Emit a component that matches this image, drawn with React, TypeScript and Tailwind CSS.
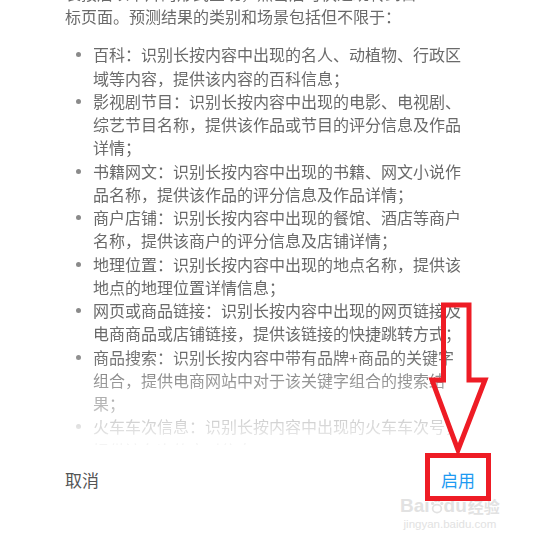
import React from "react";

const items: string[][] = [
  ["百科：识别长按内容中出现的名人、动植物、行政区", "域等内容，提供该内容的百科信息；"],
  ["影视剧节目：识别长按内容中出现的电影、电视剧、", "综艺节目名称，提供该作品或节目的评分信息及作品", "详情；"],
  ["书籍网文：识别长按内容中出现的书籍、网文小说作", "品名称，提供该作品的评分信息及作品详情；"],
  ["商户店铺：识别长按内容中出现的餐馆、酒店等商户", "名称，提供该商户的评分信息及店铺详情；"],
  ["地理位置：识别长按内容中出现的地点名称，提供该", "地点的地理位置详情信息；"],
  ["网页或商品链接：识别长按内容中出现的网页链接及", "电商商品或店铺链接，提供该链接的快捷跳转方式；"],
  ["商品搜索：识别长按内容中带有品牌+商品的关键字", "组合，提供电商网站中对于该关键字组合的搜索结", "果；"],
  ["火车车次信息：识别长按内容中出现的火车车次号，", "提供该车次的实时信息；"],
];

export default function App() {
  return (
    <div
      className="relative w-[538px] h-[542px] overflow-hidden bg-white"
      style={{ fontFamily: '"Noto Sans CJK SC", "Noto Sans", sans-serif' }}
    >
      <div className="h-[445px] overflow-hidden [mask-image:linear-gradient(to_bottom,black_352px,transparent_452px)]">
        <div className="-mt-[18px] pl-[65px] text-[16px] leading-[23.25px] text-[#6a6a6a] whitespace-nowrap">
          <p>
            长按后以卡片的形式呈现，点击后可快速跳转到目
            <br />
            标页面。预测结果的类别和场景包括但不限于：
          </p>
          <ul className="mt-[14.75px] flex flex-col">
            {items.map((lines, i) => (
              <li key={i} className="flex">
                <div className="w-[28px] h-[23.25px] flex items-center pl-[11px]">
                  <span className="block w-[5px] h-[5px] rounded-full bg-[#8a8a8a]" />
                </div>
                <div>
                  {lines.map((l, j) => (
                    <div key={j}>{l}</div>
                  ))}
                </div>
              </li>
            ))}
          </ul>
        </div>
      </div>

      <div className="flex items-center justify-between pl-[65px] pr-[63px] pt-[23px]">
        <span className="text-[17px] leading-[24px] text-[#555555]">取消</span>
        <span className="text-[17px] leading-[24px] text-[#1e9af2]">启用</span>
      </div>

      <div className="absolute left-[400px] top-[496px] flex flex-col items-center text-[#e2e2e2] leading-none whitespace-nowrap">
        <div className="flex items-center">
          <span className="text-[19px] font-bold" style={{ fontFamily: '"Liberation Sans", Arial, sans-serif' }}>
            Bai
          </span>
          <svg width="14" height="16" viewBox="0 0 16 18">
            <ellipse cx="8" cy="12" rx="5" ry="4.5" fill="none" stroke="#e2e2e2" strokeWidth="2" />
            <circle cx="3" cy="6" r="1.8" fill="#e2e2e2" />
            <circle cx="6.5" cy="3" r="1.8" fill="#e2e2e2" />
            <circle cx="10" cy="3" r="1.8" fill="#e2e2e2" />
            <circle cx="13.5" cy="6" r="1.8" fill="#e2e2e2" />
          </svg>
          <span className="text-[19px] font-bold" style={{ fontFamily: '"Liberation Sans", Arial, sans-serif' }}>
            du
          </span>
          <span className="text-[16px] font-bold ml-[1px]">经验</span>
        </div>
        <span
          className="mt-[4px] text-[11.5px]"
          style={{ fontFamily: '"Liberation Sans", Arial, sans-serif' }}
        >
          jingyan.baidu.com
        </span>
      </div>

      <svg className="absolute left-0 top-0 pointer-events-none" width="538" height="542" viewBox="0 0 538 542">
        <polygon
          points="443.5,305 469,305 469,380 485,380 458,450 432,380 443.5,380"
          fill="none"
          stroke="#ee1c25"
          strokeWidth="5"
          strokeLinejoin="miter"
        />
        <rect x="427.5" y="455.5" width="61" height="43" fill="none" stroke="#ee1c25" strokeWidth="5" />
      </svg>
    </div>
  );
}
